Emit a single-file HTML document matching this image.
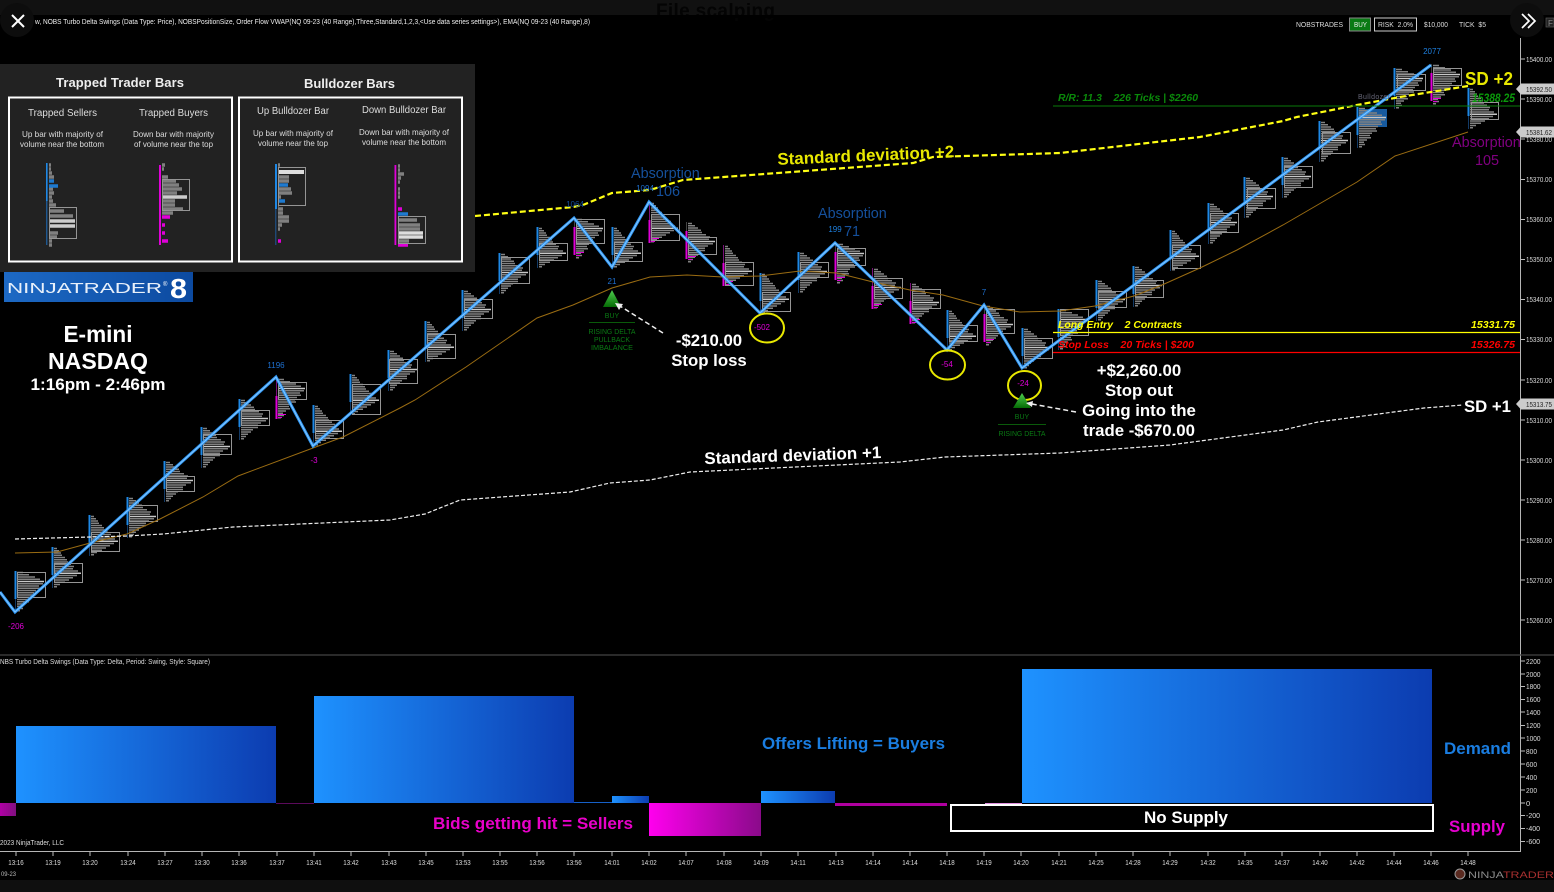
<!DOCTYPE html>
<html lang="en">
<head>
<meta charset="utf-8">
<title>E-mini NASDAQ chart</title>
<style>
html,body{margin:0;padding:0;background:#000;width:1554px;height:892px;overflow:hidden}
svg{display:block;font-family:"Liberation Sans",sans-serif}
.b{font-weight:bold}
.n{fill:#ddd;font-size:7.5px}
.s{fill:#ddd;font-size:8.2px}
.h{fill:#ddd;font-size:10px}
.t{fill:#fff;font-weight:bold;font-size:16.8px;text-anchor:middle}
.g{fill:#0a7a14;font-size:7px;text-anchor:middle}
.i{font-style:italic;font-weight:bold;font-size:10px}
.box{fill:none;stroke:#959595;stroke-width:1}
.a{fill:#15509c;font-size:14.4px}
</style>
</head>
<body>
<svg width="1554" height="892" viewBox="0 0 1554 892" xmlns="http://www.w3.org/2000/svg">
<defs>
<linearGradient id="bl"><stop offset="0" stop-color="#1e92ff"/><stop offset="1" stop-color="#0c3cb0"/></linearGradient>
<linearGradient id="mg"><stop offset="0" stop-color="#ff00ee"/><stop offset="1" stop-color="#8a0a8a"/></linearGradient>
<linearGradient id="mg2"><stop offset="0" stop-color="#b000a5"/><stop offset="1" stop-color="#80107f"/></linearGradient>
<linearGradient id="gr" x1="0" y1="0" x2="0" y2="1"><stop offset="0" stop-color="#4fce4f"/><stop offset="1" stop-color="#056b05"/></linearGradient>
<linearGradient id="nt" x1="0" y1="0" x2="1" y2="0"><stop offset="0" stop-color="#1d69c4"/><stop offset="1" stop-color="#0c4aa0"/></linearGradient>
<g id="pl" fill="none" stroke-width="1.500">
<path stroke="#828282" d="M2 1.500h3M2 3.700h5M2 6h7M2 8.200h8M2 10.500h11M2 12.700h13M2 15h14M2 17.200h17M2 19.500h20M2 21.700h19M2 24h24M2 28.500h23M2 30.700h19M2 33h15M2 35.200h11M2 37.500h6M2 39.700h3"/>
<path stroke="#c8c8c8" d="M2 26.200h27"/>
</g>
<g id="pm" fill="none" stroke-width="1.500">
<path stroke="#828282" d="M2 1.500h4M2 3.700h7M2 6h10M2 8.200h13M2 10.500h14M2 12.700h18M2 15h22M2 17.200h21M2 21.700h25M2 24h20M2 26.200h17M2 28.500h17M2 30.700h12M2 33h10M2 35.200h7M2 37.500h5M2 39.700h3"/>
<path stroke="#c8c8c8" d="M2 19.500h27"/>
</g>
<g id="ph" fill="none" stroke-width="1.500">
<path stroke="#828282" d="M2 1.500h6M2 3.700h12M2 6h18M2 8.200h23M2 12.700h26M2 15h22M2 17.200h23M2 19.500h19M2 21.700h17M2 24h18M2 26.200h13M2 28.500h11M2 30.700h12M2 33h8M2 35.200h5M2 37.500h6M2 39.700h3"/>
<path stroke="#c8c8c8" d="M2 10.500h27"/>
</g>
<g id="vb"><rect x="-.5" y="0" width="2" height="28" fill="#1e88e5"/><rect x="0" y="28" width="1" height="13" fill="#123a66"/></g>
<g id="vm"><rect x="0" y="0" width="1" height="9" fill="#444"/><rect x="-.5" y="9" width="2" height="28" fill="#e000d8"/><path d="M2 34.500h8M2 37.500h4" stroke="#e000d8" stroke-width="1"/></g>
<g id="vn"><rect x="0" y="0" width="1" height="18" fill="#7a107a"/><rect x="-.5" y="18" width="2" height="23" fill="#e000d8"/><path d="M2 36.500h8M2 39.500h4" stroke="#e000d8" stroke-width="1"/></g>
</defs>

<rect width="1554" height="892" fill="#000"/>
<!-- window strips -->
<rect width="1554" height="15" fill="#111"/>
<text class="b" x="656" y="17" font-size="19" fill="#040404" textLength="119">File scalping</text>
<rect x="0" y="15" width="1554" height="3" fill="#000"/>
<rect y="880" width="1554" height="12" fill="#0f0f0f"/>
<circle cx="17" cy="20" r="17" fill="#0d0d0d"/>
<circle cx="1527" cy="20" r="17" fill="#0d0d0d"/>
<path d="M12 15l12 12M24 15l-12 12" stroke="#fff" stroke-width="2" fill="none"/>
<path d="M1522 14l7 7-7 7M1528 14l7 7-7 7" stroke="#fff" stroke-width="1.700" fill="none"/>
<rect x="1546" y="18" width="8" height="9" fill="#222" stroke="#555" stroke-width=".7"/>
<text x="1548" y="26" font-size="8" fill="#888">F</text>

<text x="35" y="24" font-size="7" fill="#eee" textLength="555" lengthAdjust="spacingAndGlyphs">w, NOBS Turbo Delta Swings (Data Type: Price), NOBSPositionSize, Order Flow VWAP(NQ 09-23 (40 Range),Three,Standard,1,2,3,&lt;Use data series settings&gt;), EMA(NQ 09-23 (40 Range),8)</text>
<text x="1296" y="27" font-size="7" fill="#ddd" textLength="47" lengthAdjust="spacingAndGlyphs">NOBSTRADES</text>
<rect x="1349.500" y="18" width="21" height="13" fill="#0a7a14" stroke="#888"/>
<text x="1354" y="27" font-size="7" fill="#eee" textLength="13" lengthAdjust="spacingAndGlyphs">BUY</text>
<rect x="1374.500" y="18" width="42" height="13" fill="#000" stroke="#ccc"/>
<text x="1378" y="27" font-size="7" fill="#ddd" textLength="35" lengthAdjust="spacingAndGlyphs">RISK&#160;&#160;2.0%</text>
<text x="1424" y="27" font-size="7" fill="#ddd" textLength="24" lengthAdjust="spacingAndGlyphs">$10,000</text>
<text x="1459" y="27" font-size="7" fill="#ddd" textLength="27" lengthAdjust="spacingAndGlyphs">TICK&#160;&#160;$5</text>

<!-- axes -->
<path d="M1520.500 38V852M0 851.500H1521" stroke="#b5b5b5" fill="none"/>
<path d="M0 655H1554" stroke="#444" stroke-width="1.200"/>
<g stroke="#bbb"><path d="M1521 59h4M1521 99h4M1521 139h4M1521 179.500h4M1521 219.500h4M1521 259.500h4M1521 299.500h4M1521 339.500h4M1521 380h4M1521 420h4M1521 460h4M1521 500h4M1521 540h4M1521 580h4M1521 620h4M1521 661h4M1521 674h4M1521 686.500h4M1521 699.500h4M1521 712h4M1521 725.500h4M1521 738h4M1521 751h4M1521 764h4M1521 777h4M1521 790h4M1521 803h4M1521 815.500h4M1521 828.500h4M1521 841.500h4"/></g>
<g>
<text class="n" x="1526" y="62" textLength="26" lengthAdjust="spacingAndGlyphs">15400.00</text><text class="n" x="1526" y="102" textLength="26" lengthAdjust="spacingAndGlyphs">15390.00</text><text class="n" x="1526" y="142" textLength="26" lengthAdjust="spacingAndGlyphs">15380.00</text><text class="n" x="1526" y="182" textLength="26" lengthAdjust="spacingAndGlyphs">15370.00</text><text class="n" x="1526" y="222" textLength="26" lengthAdjust="spacingAndGlyphs">15360.00</text><text class="n" x="1526" y="262" textLength="26" lengthAdjust="spacingAndGlyphs">15350.00</text><text class="n" x="1526" y="302" textLength="26" lengthAdjust="spacingAndGlyphs">15340.00</text><text class="n" x="1526" y="342" textLength="26" lengthAdjust="spacingAndGlyphs">15330.00</text><text class="n" x="1526" y="383" textLength="26" lengthAdjust="spacingAndGlyphs">15320.00</text><text class="n" x="1526" y="423" textLength="26" lengthAdjust="spacingAndGlyphs">15310.00</text><text class="n" x="1526" y="463" textLength="26" lengthAdjust="spacingAndGlyphs">15300.00</text><text class="n" x="1526" y="503" textLength="26" lengthAdjust="spacingAndGlyphs">15290.00</text><text class="n" x="1526" y="543" textLength="26" lengthAdjust="spacingAndGlyphs">15280.00</text><text class="n" x="1526" y="583" textLength="26" lengthAdjust="spacingAndGlyphs">15270.00</text><text class="n" x="1526" y="623" textLength="26" lengthAdjust="spacingAndGlyphs">15260.00</text>
<text class="n" x="1526" y="664" textLength="14.500" lengthAdjust="spacingAndGlyphs">2200</text><text class="n" x="1526" y="677" textLength="14.500" lengthAdjust="spacingAndGlyphs">2000</text><text class="n" x="1526" y="689" textLength="14.500" lengthAdjust="spacingAndGlyphs">1800</text><text class="n" x="1526" y="702" textLength="14.500" lengthAdjust="spacingAndGlyphs">1600</text><text class="n" x="1526" y="715" textLength="14.500" lengthAdjust="spacingAndGlyphs">1400</text><text class="n" x="1526" y="728" textLength="14.500" lengthAdjust="spacingAndGlyphs">1200</text><text class="n" x="1526" y="741" textLength="14.500" lengthAdjust="spacingAndGlyphs">1000</text><text class="n" x="1526" y="754" textLength="11" lengthAdjust="spacingAndGlyphs">800</text><text class="n" x="1526" y="767" textLength="11" lengthAdjust="spacingAndGlyphs">600</text><text class="n" x="1526" y="780" textLength="11" lengthAdjust="spacingAndGlyphs">400</text><text class="n" x="1526" y="793" textLength="11" lengthAdjust="spacingAndGlyphs">200</text><text class="n" x="1526" y="806">0</text><text class="n" x="1526" y="818" textLength="14" lengthAdjust="spacingAndGlyphs">-200</text><text class="n" x="1526" y="831" textLength="14" lengthAdjust="spacingAndGlyphs">-400</text><text class="n" x="1526" y="844" textLength="14" lengthAdjust="spacingAndGlyphs">-600</text>
</g>
<g fill="#ccc"><polygon points="1516,89 1521,83.500 1554,83.500 1554,94.500 1521,94.500"/><polygon points="1516,132 1521,126.500 1554,126.500 1554,137.500 1521,137.500"/><polygon points="1516,404 1521,398.500 1554,398.500 1554,409.500 1521,409.500"/></g>
<g font-size="7.500" fill="#222"><text x="1526" y="92" textLength="26" lengthAdjust="spacingAndGlyphs">15392.50</text><text x="1526" y="135" textLength="26" lengthAdjust="spacingAndGlyphs">15381.62</text><text x="1526" y="407" textLength="26" lengthAdjust="spacingAndGlyphs">15313.75</text></g>

<!-- time axis -->
<path stroke="#bbb" d="M16 852v4M53 852v4M90 852v4M128 852v4M165 852v4M202 852v4M239 852v4M277 852v4M314 852v4M351 852v4M389 852v4M426 852v4M463 852v4M500 852v4M537 852v4M574 852v4M612 852v4M649 852v4M686 852v4M724 852v4M761 852v4M798 852v4M836 852v4M873 852v4M910 852v4M947 852v4M984 852v4M1021 852v4M1059 852v4M1096 852v4M1133 852v4M1170 852v4M1208 852v4M1245 852v4M1282 852v4M1320 852v4M1357 852v4M1394 852v4M1431 852v4M1468 852v4"/>
<g text-anchor="middle" font-size="7.500" fill="#ddd">
<text x="16" y="865" textLength="15.500" lengthAdjust="spacingAndGlyphs">13:16</text><text x="53" y="865" textLength="15.500" lengthAdjust="spacingAndGlyphs">13:19</text><text x="90" y="865" textLength="15.500" lengthAdjust="spacingAndGlyphs">13:20</text><text x="128" y="865" textLength="15.500" lengthAdjust="spacingAndGlyphs">13:24</text><text x="165" y="865" textLength="15.500" lengthAdjust="spacingAndGlyphs">13:27</text><text x="202" y="865" textLength="15.500" lengthAdjust="spacingAndGlyphs">13:30</text><text x="239" y="865" textLength="15.500" lengthAdjust="spacingAndGlyphs">13:36</text><text x="277" y="865" textLength="15.500" lengthAdjust="spacingAndGlyphs">13:37</text><text x="314" y="865" textLength="15.500" lengthAdjust="spacingAndGlyphs">13:41</text><text x="351" y="865" textLength="15.500" lengthAdjust="spacingAndGlyphs">13:42</text><text x="389" y="865" textLength="15.500" lengthAdjust="spacingAndGlyphs">13:43</text><text x="426" y="865" textLength="15.500" lengthAdjust="spacingAndGlyphs">13:45</text><text x="463" y="865" textLength="15.500" lengthAdjust="spacingAndGlyphs">13:53</text><text x="500" y="865" textLength="15.500" lengthAdjust="spacingAndGlyphs">13:55</text><text x="537" y="865" textLength="15.500" lengthAdjust="spacingAndGlyphs">13:56</text><text x="574" y="865" textLength="15.500" lengthAdjust="spacingAndGlyphs">13:56</text><text x="612" y="865" textLength="15.500" lengthAdjust="spacingAndGlyphs">14:01</text><text x="649" y="865" textLength="15.500" lengthAdjust="spacingAndGlyphs">14:02</text><text x="686" y="865" textLength="15.500" lengthAdjust="spacingAndGlyphs">14:07</text><text x="724" y="865" textLength="15.500" lengthAdjust="spacingAndGlyphs">14:08</text><text x="761" y="865" textLength="15.500" lengthAdjust="spacingAndGlyphs">14:09</text><text x="798" y="865" textLength="15.500" lengthAdjust="spacingAndGlyphs">14:11</text><text x="836" y="865" textLength="15.500" lengthAdjust="spacingAndGlyphs">14:13</text><text x="873" y="865" textLength="15.500" lengthAdjust="spacingAndGlyphs">14:14</text><text x="910" y="865" textLength="15.500" lengthAdjust="spacingAndGlyphs">14:14</text><text x="947" y="865" textLength="15.500" lengthAdjust="spacingAndGlyphs">14:18</text><text x="984" y="865" textLength="15.500" lengthAdjust="spacingAndGlyphs">14:19</text><text x="1021" y="865" textLength="15.500" lengthAdjust="spacingAndGlyphs">14:20</text><text x="1059" y="865" textLength="15.500" lengthAdjust="spacingAndGlyphs">14:21</text><text x="1096" y="865" textLength="15.500" lengthAdjust="spacingAndGlyphs">14:25</text><text x="1133" y="865" textLength="15.500" lengthAdjust="spacingAndGlyphs">14:28</text><text x="1170" y="865" textLength="15.500" lengthAdjust="spacingAndGlyphs">14:29</text><text x="1208" y="865" textLength="15.500" lengthAdjust="spacingAndGlyphs">14:32</text><text x="1245" y="865" textLength="15.500" lengthAdjust="spacingAndGlyphs">14:35</text><text x="1282" y="865" textLength="15.500" lengthAdjust="spacingAndGlyphs">14:37</text><text x="1320" y="865" textLength="15.500" lengthAdjust="spacingAndGlyphs">14:40</text><text x="1357" y="865" textLength="15.500" lengthAdjust="spacingAndGlyphs">14:42</text><text x="1394" y="865" textLength="15.500" lengthAdjust="spacingAndGlyphs">14:44</text><text x="1431" y="865" textLength="15.500" lengthAdjust="spacingAndGlyphs">14:46</text><text x="1468" y="865" textLength="15.500" lengthAdjust="spacingAndGlyphs">14:48</text>
</g>
<text x="1" y="876" font-size="6" fill="#bbb" textLength="15" lengthAdjust="spacingAndGlyphs">09-23</text>
<text x="0" y="664" font-size="7" fill="#ddd" textLength="210" lengthAdjust="spacingAndGlyphs">NBS Turbo Delta Swings (Data Type: Delta, Period: Swing, Style: Square)</text>
<text x="0" y="845" font-size="7" fill="#ddd" textLength="64" lengthAdjust="spacingAndGlyphs">2023 NinjaTrader, LLC</text>
<circle cx="1460" cy="874" r="5" fill="#5a2a20" stroke="#999"/>
<text x="1468" y="878" font-size="9.500" fill="#8a8a8a" textLength="86" lengthAdjust="spacingAndGlyphs">NINJA<tspan fill="#a83030">TRADER</tspan></text>

<!-- lower panel -->
<rect x="16" y="726" width="260" height="77" fill="url(#bl)"/>
<rect x="314" y="696" width="260" height="107" fill="url(#bl)"/>
<rect x="574" y="802" width="38" height="1" fill="#1660c8"/>
<rect x="612" y="796" width="37" height="7" fill="url(#bl)"/>
<rect x="761" y="791" width="74" height="12" fill="url(#bl)"/>
<rect x="1022" y="669" width="410" height="134" fill="url(#bl)"/>
<rect x="0" y="803" width="16" height="13" fill="url(#mg2)"/>
<rect x="276" y="803" width="38" height="1" fill="#5a0a5a"/>
<rect x="649" y="803" width="112" height="33" fill="url(#mg)"/>
<rect x="835" y="803" width="112" height="3" fill="#b000a0"/>
<rect x="985" y="803" width="37" height="1" fill="#e090e0"/>
<rect x="951" y="805" width="482" height="26" fill="#000" stroke="#fff" stroke-width="2"/>
<text class="t" x="1186" y="823" textLength="84" lengthAdjust="spacingAndGlyphs">No Supply</text>
<g class="b" font-size="17">
<text x="762" y="749" fill="#1a7de0" textLength="183" lengthAdjust="spacingAndGlyphs">Offers Lifting = Buyers</text>
<text x="1444" y="754" fill="#1a7de0" textLength="67" lengthAdjust="spacingAndGlyphs">Demand</text>
<text x="1449" y="832" fill="#e600cf" textLength="56" lengthAdjust="spacingAndGlyphs">Supply</text>
<text x="433" y="829" fill="#e800c8" textLength="200" lengthAdjust="spacingAndGlyphs">Bids getting hit = Sellers</text>
</g>

<!-- profile bars -->
<g>
<use href="#ph" x="15" y="571"/><use href="#vb" x="15" y="571"/><rect class="box" x="17.500" y="572.500" width="28" height="25"/>
<use href="#pl" x="52" y="547"/><use href="#vb" x="52" y="547"/><rect class="box" x="54.500" y="563.500" width="28" height="19"/>
<use href="#pl" x="89" y="515"/><use href="#vb" x="89" y="515"/><rect class="box" x="91.500" y="532.500" width="28" height="19"/>
<use href="#pm" x="127" y="497"/><use href="#vb" x="127" y="497"/><rect class="box" x="129.500" y="505.500" width="28" height="16"/>
<use href="#pm" x="164" y="461"/><use href="#vb" x="164" y="461"/><rect class="box" x="166.500" y="476.500" width="28" height="15"/>
<use href="#pm" x="201" y="427"/><use href="#vb" x="201" y="427"/><rect class="box" x="203.500" y="434.500" width="28" height="20"/>
<use href="#pm" x="239" y="399"/><use href="#vb" x="239" y="399"/><rect class="box" x="241.500" y="410.500" width="28" height="15"/>
<use href="#ph" x="276" y="378"/><use href="#vn" x="276" y="378"/><rect class="box" x="278.500" y="382.500" width="28" height="17"/>
<use href="#pl" x="313" y="405"/><use href="#vb" x="313" y="405"/><rect class="box" x="315.500" y="420.500" width="28" height="18"/>
<use href="#pl" x="350" y="374"/><use href="#vb" x="350" y="374"/><rect class="box" x="352.500" y="384.500" width="28" height="30"/>
<use href="#pm" x="388" y="350"/><use href="#vb" x="388" y="350"/><rect class="box" x="389.500" y="359.500" width="28" height="24"/>
<use href="#pl" x="425" y="321"/><use href="#vb" x="425" y="321"/><rect class="box" x="427.500" y="334.500" width="28" height="24"/>
<use href="#pm" x="462" y="290"/><use href="#vb" x="462" y="290"/><rect class="box" x="464.500" y="299.500" width="28" height="19"/>
<use href="#pm" x="499" y="253"/><use href="#vb" x="499" y="253"/><rect class="box" x="501.500" y="257.500" width="28" height="26"/>
<use href="#pl" x="537" y="227"/><use href="#vb" x="537" y="227"/><rect class="box" x="539.500" y="243.500" width="28" height="17"/>
<use href="#ph" x="574" y="218"/><use href="#vm" x="574" y="218"/><rect class="box" x="576.500" y="219.500" width="28" height="24"/>
<use href="#pl" x="612" y="227"/><use href="#vb" x="612" y="227"/><rect class="box" x="614.500" y="242.500" width="28" height="19"/>
<use href="#pl" x="649" y="202"/><use href="#vn" x="649" y="202"/><rect class="box" x="651.500" y="214.500" width="28" height="26"/>
<use href="#pm" x="686" y="222"/><use href="#vm" x="686" y="222"/><rect class="box" x="688.500" y="237.500" width="28" height="17"/>
<use href="#pl" x="723" y="245"/><use href="#vn" x="723" y="245"/><rect class="box" x="725.500" y="262.500" width="28" height="23"/>
<use href="#pl" x="760" y="273"/><use href="#vb" x="760" y="273"/><rect class="box" x="762.500" y="292.500" width="28" height="19"/>
<use href="#pm" x="798" y="252"/><use href="#vb" x="798" y="252"/><rect class="box" x="800.500" y="262.500" width="28" height="15"/>
<use href="#ph" x="835" y="243"/><use href="#vm" x="835" y="243"/><rect class="box" x="837.500" y="248.500" width="28" height="17"/>
<use href="#pm" x="872" y="268"/><use href="#vn" x="872" y="268"/><rect class="box" x="874.500" y="278.500" width="28" height="20"/>
<use href="#pm" x="910" y="283"/><use href="#vn" x="910" y="283"/><rect class="box" x="912.500" y="289.500" width="28" height="19"/>
<use href="#pl" x="947" y="310"/><use href="#vb" x="947" y="310"/><rect class="box" x="949.500" y="325.500" width="28" height="16"/>
<use href="#pm" x="984" y="305"/><use href="#vm" x="984" y="305"/><rect class="box" x="986.500" y="309.500" width="28" height="24"/>
<use href="#pm" x="1022" y="328"/><use href="#vb" x="1022" y="328"/><rect class="box" x="1024.500" y="338.500" width="28" height="20"/>
<use href="#ph" x="1058" y="309"/><use href="#vb" x="1058" y="309"/><rect class="box" x="1060.500" y="309.500" width="28" height="26"/>
<use href="#pm" x="1096" y="280"/><use href="#vb" x="1096" y="280"/><rect class="box" x="1098.500" y="291.500" width="28" height="16"/>
<use href="#pm" x="1133" y="266"/><use href="#vb" x="1133" y="266"/><rect class="box" x="1135.500" y="280.500" width="28" height="17"/>
<use href="#pl" x="1170" y="230"/><use href="#vb" x="1170" y="230"/><rect class="box" x="1172.500" y="245.500" width="28" height="23"/>
<use href="#pm" x="1208" y="203"/><use href="#vb" x="1208" y="203"/><rect class="box" x="1210.500" y="213.500" width="28" height="19"/>
<use href="#pm" x="1244" y="177"/><use href="#vb" x="1244" y="177"/><rect class="box" x="1247.500" y="188.500" width="28" height="20"/>
<use href="#pm" x="1282" y="157"/><use href="#vb" x="1282" y="157"/><rect class="box" x="1284.500" y="166.500" width="28" height="21"/>
<use href="#pm" x="1319" y="121"/><use href="#vb" x="1319" y="121"/><rect class="box" x="1322.500" y="132.500" width="28" height="21"/>
<rect x="1359" y="109" width="28" height="18" fill="#175a9e"/>
<use href="#ph" x="1357" y="107"/><use href="#vb" x="1357" y="107"/>
<use href="#ph" x="1394" y="68"/><use href="#vb" x="1394" y="68"/><rect class="box" x="1397.500" y="74.500" width="28" height="16"/>
<use href="#ph" x="1431" y="64"/><use href="#vm" x="1431" y="64"/><rect class="box" x="1433.500" y="68.500" width="28" height="17"/>
<use href="#pl" x="1468" y="88"/><use href="#vb" x="1468" y="88"/><rect class="box" x="1471.500" y="102.500" width="27" height="17"/>
</g>

<!-- indicator lines -->
<polyline fill="none" stroke="#9a6c12" stroke-width="1" points="15,553 57,552 90,543 127,534 160,519 203,497 238,476 313,448 343,437 400,408 415,400 466,367 537,318 573,305 612,288 650,277 687,275 723,277 760,276 800,271 837,273 873,282 910,290 943,295 983,306 1020,312 1060,311 1095,306 1134,296 1162,285 1200,268 1237,250 1283,225 1357,182 1395,156 1468,132"/>
<polyline fill="none" stroke="#eee" stroke-width="1.200" stroke-dasharray="4 2" points="15,539 127,536 163,534 233,527 390,520 425,514 460,500 570,492 610,483 650,480 690,472 900,462 945,457 1060,453 1170,445 1283,430 1318,422 1424,408 1463,405"/>
<polyline fill="none" stroke="#ffff14" stroke-width="2.200" stroke-dasharray="6 3" points="475,216 573,207 583,205 612,193 650,190 683,180 913,163 933,157 1060,153 1200,137 1283,121 1297,117 1357,105 1400,97 1468,86"/>

<!-- swing line -->
<polyline fill="none" stroke="#2f97f5" stroke-width="3" stroke-linejoin="miter" points="0,592 15,612 276,377 313,446 574,218 612,267 649,202 760,313 835,243 947,350 984,305 1022,368 1431,65"/>
<polyline fill="none" stroke="#86c8ff" stroke-width="1" points="0,592 15,612 276,377 313,446 574,218 612,267 649,202 760,313 835,243 947,350 984,305 1022,368 1431,65"/>

<!-- position lines -->
<path d="M1053 106H1520" stroke="#0a7a0a"/>
<path d="M1053 332.500H1520" stroke="#ffff00" stroke-width="1.200"/>
<path d="M1053 352.500H1520" stroke="#ff0000" stroke-width="1.200"/>
<text class="i" x="1058" y="101" fill="#0a8a0a" textLength="140" lengthAdjust="spacingAndGlyphs">R/R: 11.3&#160;&#160;&#160;&#160;226 Ticks | $2260</text>
<text class="i" x="1472" y="102" style="font-size:12px" fill="#0a9a0a" textLength="43" lengthAdjust="spacingAndGlyphs">15388.25</text>
<text x="1358" y="99" font-size="7" fill="#667" textLength="32">Bulldozer</text>
<text class="i" x="1058" y="328" fill="#ffff00" textLength="124" lengthAdjust="spacingAndGlyphs">Long Entry&#160;&#160;&#160;&#160;2 Contracts</text>
<text class="i" x="1471" y="328" fill="#ffff00" textLength="44" lengthAdjust="spacingAndGlyphs">15331.75</text>
<text class="i" x="1058" y="348" fill="#ff0000" textLength="136" lengthAdjust="spacingAndGlyphs">Stop Loss&#160;&#160;&#160;&#160;20 Ticks | $200</text>
<text class="i" x="1471" y="348" fill="#ff0000" textLength="44" lengthAdjust="spacingAndGlyphs">15326.75</text>

<!-- delta labels -->
<g font-size="8" text-anchor="middle">
<text x="276" y="368" fill="#1e70d0">1196</text>
<text x="16" y="629" fill="#e000d8">-206</text>
<text x="314" y="463" fill="#e000d8">-3</text>
<text x="1432" y="54" fill="#1e80e0">2077</text>
<text x="612" y="284" fill="#1e70d0">21</text>
<text x="575" y="207" fill="#15509c">1064</text>
<text x="645" y="191" fill="#1e70d0">1094</text>
<text x="835" y="232" fill="#1e80e0">199</text>
<text x="984" y="295" fill="#1e70d0">7</text>
<text x="762" y="330" fill="#e000d8">-502</text>
<text x="947" y="367" fill="#e000d8">-54</text>
<text x="1023" y="386" fill="#e000d8">-24</text>
</g>
<g fill="none" stroke="#e8e800" stroke-width="2">
<ellipse cx="767" cy="328" rx="17" ry="14.500"/>
<ellipse cx="947.500" cy="365" rx="17.500" ry="14.500"/>
<ellipse cx="1024.500" cy="385.500" rx="16.500" ry="14.500"/>
</g>

<!-- buy arrows -->
<polygon points="612,290 603,307 621,307" fill="url(#gr)"/>
<text class="g" x="612" y="318">BUY</text>
<path d="M589 322.500H635" stroke="#0a5a0a"/>
<text class="g" x="612" y="334" textLength="47" lengthAdjust="spacingAndGlyphs">RISING DELTA</text><text class="g" x="612" y="342" textLength="36" lengthAdjust="spacingAndGlyphs">PULLBACK</text><text class="g" x="612" y="350" textLength="42" lengthAdjust="spacingAndGlyphs">IMBALANCE</text>
<polygon points="1022,393 1013,408 1031,408" fill="url(#gr)"/>
<text class="g" x="1022" y="419">BUY</text>
<path d="M998 424.500H1046" stroke="#0a5a0a"/>
<text class="g" x="1022" y="436" textLength="47" lengthAdjust="spacingAndGlyphs">RISING DELTA</text>
<path d="M663 333L620 306" stroke="#eee" stroke-width="1.500" stroke-dasharray="5 3" fill="none"/>
<polygon points="615,303 623,304 619,310" fill="#eee"/>
<path d="M1076 412L1032 404" stroke="#eee" stroke-width="1.500" stroke-dasharray="5 3" fill="none"/>
<polygon points="1026,403 1033,401 1032,407" fill="#eee"/>

<!-- annotations -->
<text class="t" transform="translate(866,161) rotate(-2.500)" style="fill:#e8e800" textLength="177" lengthAdjust="spacingAndGlyphs">Standard deviation +2</text>
<text class="t" transform="translate(793,461) rotate(-2)" textLength="177" lengthAdjust="spacingAndGlyphs">Standard deviation +1</text>
<text class="b" x="1465" y="85" font-size="18" fill="#e8e800" textLength="48" lengthAdjust="spacingAndGlyphs">SD +2</text>
<text class="b" x="1464" y="412" font-size="17" fill="#fff" textLength="47" lengthAdjust="spacingAndGlyphs">SD +1</text>
<text class="a" x="631" y="178">Absorption</text><text class="a" x="656" y="196">106</text>
<text class="a" x="818" y="218">Absorption</text><text class="a" x="844" y="236">71</text>
<text class="a" x="1452" y="147" style="fill:#800080">Absorption</text><text class="a" x="1475" y="165" style="fill:#800080">105</text>
<text class="t" x="709" y="346">-$210.00</text><text class="t" x="709" y="366">Stop loss</text>
<text class="t" x="1139" y="376">+$2,260.00</text><text class="t" x="1139" y="396">Stop out</text><text class="t" x="1139" y="416">Going into the</text><text class="t" x="1139" y="436">trade -$670.00</text>

<!-- panel -->
<rect x="0" y="64" width="475" height="208" fill="#222"/>
<rect x="9" y="97.500" width="223" height="164" fill="#222" stroke="#fff" stroke-width="2"/>
<rect x="239" y="97.500" width="223" height="164" fill="#222" stroke="#fff" stroke-width="2"/>
<text class="b" x="56" y="87" font-size="13" fill="#eee" textLength="128">Trapped Trader Bars</text>
<text class="b" x="304" y="88" font-size="13" fill="#eee" textLength="91">Bulldozer Bars</text>
<text class="h" x="28" y="116" textLength="69" lengthAdjust="spacingAndGlyphs">Trapped Sellers</text>
<text class="s" x="22" y="137" textLength="81" lengthAdjust="spacingAndGlyphs">Up bar with majority of</text>
<text class="s" x="20" y="147" textLength="84" lengthAdjust="spacingAndGlyphs">volume near the bottom</text>
<text class="h" x="139" y="116" textLength="69" lengthAdjust="spacingAndGlyphs">Trapped Buyers</text>
<text class="s" x="133" y="137" textLength="81" lengthAdjust="spacingAndGlyphs">Down bar with majority</text>
<text class="s" x="134" y="147" textLength="79" lengthAdjust="spacingAndGlyphs">of volume near the top</text>
<text class="h" x="257" y="114" textLength="72" lengthAdjust="spacingAndGlyphs">Up Bulldozer Bar</text>
<text class="s" x="253" y="136" textLength="80" lengthAdjust="spacingAndGlyphs">Up bar with majority of</text>
<text class="s" x="258" y="146" textLength="70" lengthAdjust="spacingAndGlyphs">volume near the top</text>
<text class="h" x="362" y="113" textLength="84" lengthAdjust="spacingAndGlyphs">Down Bulldozer Bar</text>
<text class="s" x="359" y="135" textLength="90" lengthAdjust="spacingAndGlyphs">Down bar with majority of</text>
<text class="s" x="362" y="145" textLength="84" lengthAdjust="spacingAndGlyphs">volume near the bottom</text>

<!-- mini profiles -->
<rect x="46" y="163" width="1.600" height="38" fill="#1e88e5"/><rect x="46.300" y="201" width="1" height="44" fill="#1e70c0"/>
<path fill="none" stroke="#808080" stroke-width="3.500" d="M49 165h2M49 169h2M49 173h3M49 177h5M49 189h4M49 193h5M49 197h3M49 201h4M49 205h7M49 211h15M49 216h24M49 233h9M49 237h8M49 241h3M49 245h3"/>
<path fill="none" stroke="#1e7ad0" stroke-width="3.500" d="M49 181h5M49 186h9"/>
<path fill="none" stroke="#ccc" stroke-width="3.500" d="M49 221h26M49 226h26"/>
<rect class="box" x="49.500" y="207.500" width="27" height="31"/>
<rect x="159" y="165" width="2" height="80" fill="#e000d8"/>
<path fill="none" stroke="#808080" stroke-width="3.500" d="M162 165h3M162 169h2M162 177h6M162 181h14M162 185h17M162 189h20M162 193h15M162 201h13M162 205h13M162 209h21M162 213h11"/>
<path fill="none" stroke="#ccc" stroke-width="3.500" d="M162 197h25"/>
<path fill="none" stroke="#e000d8" stroke-width="3.500" d="M162 217h8M162 225h3M162 233h3M162 241h6"/>
<rect class="box" x="162.500" y="179.500" width="27" height="31"/>
<rect x="275" y="164" width="2" height="45" fill="#1e88e5"/><rect x="275.300" y="209" width="1" height="36" fill="#1e5a9a"/>
<path fill="none" stroke="#808080" stroke-width="3.500" d="M278 165h2M278 177h11M278 181h11M278 189h13M278 193h14M278 197h3M278 205h1M278 209h5M278 213h5M278 217h11M278 221h11M278 225h4M278 229h2"/>
<path fill="none" stroke="#ddd" stroke-width="4" d="M278 172h26"/>
<path fill="none" stroke="#1e7ad0" stroke-width="3.500" d="M278 185h10M278 201h7"/>
<path fill="none" stroke="#e000d8" stroke-width="3.500" d="M278 241h3"/>
<rect class="box" x="278.500" y="167.500" width="27" height="38"/>
<rect x="394.500" y="165" width="1.800" height="80" fill="#e000d8"/>
<path fill="none" stroke="#808080" stroke-width="3.500" d="M398 166h2M398 170h2M398 174h6M398 178h3M398 182h2M398 189h2M398 193h2M398 197h2M398 220h19M398 225h22M398 229h22M398 241h11"/>
<path fill="none" stroke="#ddd" stroke-width="3.500" d="M398 233h25M398 237h25"/>
<path fill="none" stroke="#e000d8" stroke-width="3.500" d="M398 209h4M398 245h10"/>
<path fill="none" stroke="#1e7ad0" stroke-width="3.500" d="M398 214h10"/>
<rect class="box" x="398.500" y="216.500" width="27" height="27"/>

<!-- NinjaTrader logo -->
<rect x="4" y="272" width="189" height="30" fill="url(#nt)"/>
<text x="7" y="293" font-size="15" fill="#e8f0fa" textLength="155" lengthAdjust="spacingAndGlyphs">NINJATRADER</text>
<text x="163" y="286" font-size="6" fill="#fff">®</text>
<text class="b" x="170" y="298" font-size="28" fill="#fff" textLength="17" lengthAdjust="spacingAndGlyphs">8</text>

<text class="b" text-anchor="middle" x="98" y="342" font-size="23.500" fill="#fff" textLength="69" lengthAdjust="spacingAndGlyphs">E-mini</text>
<text class="b" text-anchor="middle" x="98" y="369" font-size="23.500" fill="#fff" textLength="100" lengthAdjust="spacingAndGlyphs">NASDAQ</text>
<text class="b" text-anchor="middle" x="98" y="390" font-size="17" fill="#fff" textLength="135" lengthAdjust="spacingAndGlyphs">1:16pm - 2:46pm</text>
</svg>
</body>
</html>
